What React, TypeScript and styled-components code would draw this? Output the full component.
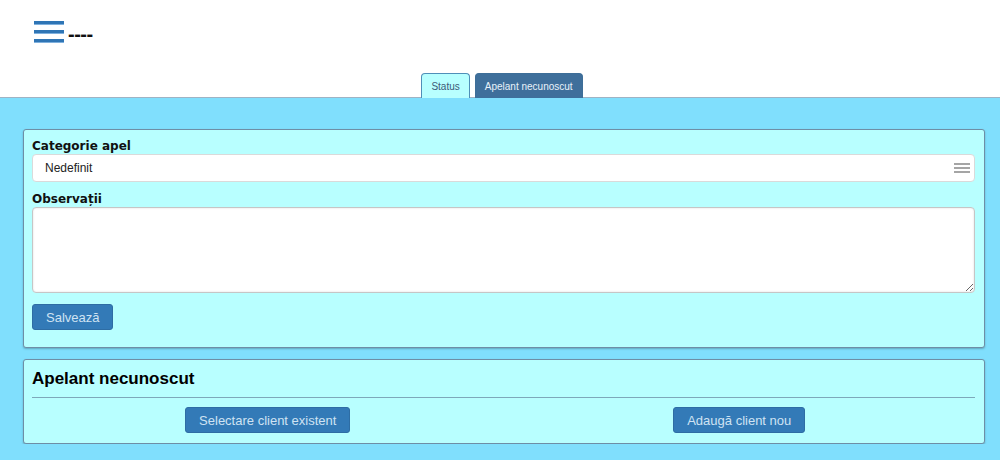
import React, { useState } from 'react'
import styled, { createGlobalStyle } from 'styled-components'

const GlobalStyle = createGlobalStyle`
  html, body {
    margin: 0;
    padding: 0;
    background: #80dffd;
    font-family: "Liberation Sans", Arial, sans-serif;
  }
`

interface tabInterface {
  name: string,
}

const tabs: Array<tabInterface> = [
  { name: 'Status' },
  { name: 'Apelant necunoscut' },
]

const App: React.FC = () => {
  const [active, setActive] = useState<number>(1)
  const [category] = useState<string>('Nedefinit')

  return <>
    <GlobalStyle />
    <Header>
      <Brand>
        <Burger>
          <span />
          <span />
          <span />
        </Burger>
        <BrandText>----</BrandText>
      </Brand>
      <TabBar>
        {tabs.map((t, i) => (
          <Tab key={t.name} $active={i === active} onClick={() => setActive(i)}>
            {t.name}
          </Tab>
        ))}
      </TabBar>
    </Header>
    <Content>
      <Panel>
        <Label>Categorie apel</Label>
        <SelectBox>
          <span>{category}</span>
          <svg width="16" height="12" viewBox="0 0 16 12">
            <rect x="0" y="1" width="16" height="2" fill="#a5a5a5" />
            <rect x="0" y="5" width="16" height="2" fill="#a5a5a5" />
            <rect x="0" y="9" width="16" height="2" fill="#a5a5a5" />
          </svg>
        </SelectBox>
        <Label>Observații</Label>
        <TextArea defaultValue="" autoFocus />
        <ButtonRow>
          <Button>Salvează</Button>
        </ButtonRow>
      </Panel>
      <Panel $compact>
        <Title>Apelant necunoscut</Title>
        <Rule />
        <Actions>
          <Button>Selectare client existent</Button>
          <Button>Adaugă client nou</Button>
        </Actions>
      </Panel>
    </Content>
  </>
}

const Header = styled.div`
  background: #fff;
  height: 97px;
  display: flex;
  flex-direction: column;
  justify-content: space-between;
  border-bottom: 1px solid #9fb3c4;
`

const Brand = styled.div`
  display: flex;
  align-items: flex-start;
  padding: 21px 0 0 34px;
`

const Burger = styled.div`
  display: flex;
  flex-direction: column;
  gap: 5px;
  width: 30px;

  span {
    display: block;
    height: 4px;
    background: linear-gradient(#2f75b5 0, #2f75b5 3px, #7fb0dd 3px);
  }
`

const BrandText = styled.div`
  margin: 0 0 0 4px;
  font-size: 20px;
  line-height: 24px;
  padding-top: 1px;
  font-weight: bold;
  letter-spacing: -0.5px;
  color: #111;
`

const TabBar = styled.div`
  display: flex;
  justify-content: center;
  gap: 5px;
  padding-left: 4px;
  margin-bottom: -1px;
`

const Tab = styled.div<{ $active?: boolean }>`
  height: 25px;
  box-sizing: border-box;
  padding: 0 9px;
  display: flex;
  align-items: center;
  font-size: 10px;
  border: 1px solid ${p => p.$active ? '#3e6e98' : '#4f8fb8'};
  border-bottom: none;
  border-radius: 4px 4px 0 0;
  background: ${p => p.$active ? '#3f6f9b' : '#b8ffff'};
  color: ${p => p.$active ? '#e8f2fa' : '#3c5a78'};
  cursor: pointer;
`

const Content = styled.div`
  padding: 31px 15px 0 23px;
  display: flex;
  flex-direction: column;
  gap: 11px;
`

const Panel = styled.div<{ $compact?: boolean }>`
  background: #b8ffff;
  border: 1px solid #6e8ea6;
  border-radius: 3px;
  box-shadow: 0 1px 2px rgba(0, 0, 0, 0.25);
  padding: ${p => p.$compact ? '8px 9px 10px 8px' : '9px 9px 17px 8px'};
  display: flex;
  flex-direction: column;
`

const Label = styled.div`
  font-family: "DejaVu Sans", Verdana, sans-serif;
  font-weight: bold;
  font-size: 12px;
  line-height: 14px;
  color: #111;
  margin-bottom: 1px;
`

const SelectBox = styled.div`
  height: 28px;
  box-sizing: border-box;
  background: #fff;
  border: 1px solid #dadada;
  border-radius: 4px;
  display: flex;
  align-items: center;
  justify-content: space-between;
  padding: 0 4px 0 12px;
  font-size: 12px;
  color: #222;
  margin-bottom: 10px;
`

const TextArea = styled.textarea`
  height: 86px;
  box-sizing: border-box;
  background: #fff;
  border: 1px solid #c6c6c6;
  border-radius: 4px;
  box-shadow: inset 0 0 2px rgba(0, 0, 0, 0.15);
  padding: 8px 12px;
  font-family: "Liberation Sans", Arial, sans-serif;
  font-size: 13px;
  resize: vertical;
  outline: none;
  caret-color: #333;
`

const ButtonRow = styled.div`
  margin-top: 11px;
  display: flex;
`

const Button = styled.button`
  height: 26px;
  padding: 0 13px;
  background: #337ab7;
  border: 1px solid #2e6da4;
  border-radius: 3px;
  color: #cfe3f3;
  font-family: "Liberation Sans", Arial, sans-serif;
  font-size: 13px;
  cursor: pointer;
`

const Title = styled.div`
  font-weight: bold;
  font-size: 17px;
  color: #000;
  padding-top: 1px;
  height: 28px;
`

const Rule = styled.div`
  height: 1px;
  background: #7ea8ba;
  margin-bottom: 9px;
`

const Actions = styled.div`
  display: grid;
  grid-template-columns: 1fr 1fr;
  justify-items: center;
`

export default App
